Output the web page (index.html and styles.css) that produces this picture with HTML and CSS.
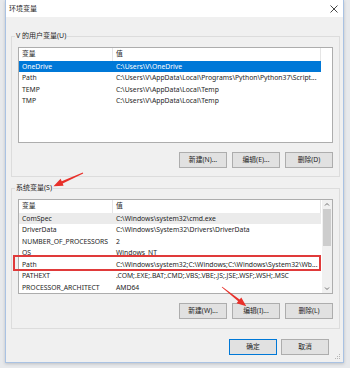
FILE: index.html
```html
<!DOCTYPE html>
<html lang="zh-CN">
<head>
<meta charset="utf-8">
<title>环境变量</title>
<link rel="stylesheet" href="styles.css">
</head>
<body>
<div class="dialog">
  <div class="titlebar">
    <span class="title">环境变量</span>
    <svg class="close" viewBox="0 0 8 8" width="8" height="8"><path d="M0.5 0.5 L7.5 7.5 M7.5 0.5 L0.5 7.5" stroke="#333" stroke-width="0.9" fill="none"/></svg>
  </div>
  <div class="content">
    <fieldset class="group">
      <legend>V 的用户变量(U)</legend>
      <div class="list list-user">
        <div class="rows">
          <div class="row head"><span>变量</span><span>值</span><span class="filler"></span></div>
          <div class="row sel"><span>OneDrive</span><span>C:\Users\V\OneDrive</span></div>
          <div class="row"><span>Path</span><span>C:\Users\V\AppData\Local\Programs\Python\Python37\Script...</span></div>
          <div class="row"><span>TEMP</span><span>C:\Users\V\AppData\Local\Temp</span></div>
          <div class="row"><span>TMP</span><span>C:\Users\V\AppData\Local\Temp</span></div>
        </div>
      </div>
      <div class="btns">
        <button class="btn">新建(N)...</button>
        <button class="btn">编辑(E)...</button>
        <button class="btn">删除(D)</button>
      </div>
    </fieldset>
    <fieldset class="group group-sys">
      <legend>系统变量(S)</legend>
      <div class="list list-sys">
        <div class="rows">
          <div class="row head"><span>变量</span><span>值</span></div>
          <div class="row hover"><span>ComSpec</span><span>C:\Windows\system32\cmd.exe</span></div>
          <div class="row"><span>DriverData</span><span>C:\Windows\System32\Drivers\DriverData</span></div>
          <div class="row"><span>NUMBER_OF_PROCESSORS</span><span>2</span></div>
          <div class="row"><span>OS</span><span>Windows_NT</span></div>
          <div class="row"><span>Path</span><span>C:\Windows\system32;C:\Windows;C:\Windows\System32\Wb...</span></div>
          <div class="row"><span>PATHEXT</span><span>.COM;.EXE;.BAT;.CMD;.VBS;.VBE;.JS;.JSE;.WSF;.WSH;.MSC</span></div>
          <div class="row"><span>PROCESSOR_ARCHITECT</span><span>AMD64</span></div>
        </div>
        <div class="vscroll">
          <svg class="arr" viewBox="0 0 10 9" width="10" height="9"><polyline points="3,5.5 5,3.5 7,5.5" fill="none" stroke="#606060" stroke-width="0.9"/></svg>
          <div class="track"><div class="thumb"></div></div>
          <svg class="arr" viewBox="0 0 10 9" width="10" height="9"><polyline points="3,3.5 5,5.5 7,3.5" fill="none" stroke="#606060" stroke-width="0.9"/></svg>
        </div>
      </div>
      <div class="btns">
        <button class="btn">新建(W)...</button>
        <button class="btn">编辑(I)...</button>
        <button class="btn">删除(L)</button>
      </div>
    </fieldset>
    <div class="footer">
      <button class="btn primary">确定</button>
      <button class="btn">取消</button>
    </div>
  </div>
  <svg class="grip" viewBox="0 0 6 6" width="6" height="6"><g fill="#b5b5b5"><rect x="4" y="0" width="1" height="1"/><rect x="2" y="2" width="1" height="1"/><rect x="4" y="2" width="1" height="1"/><rect x="0" y="4" width="1" height="1"/><rect x="2" y="4" width="1" height="1"/><rect x="4" y="4" width="1" height="1"/></g></svg>
</div>
<div class="mark"></div>
<svg class="arrows" viewBox="0 0 350 368" width="350" height="368">
  <polygon fill="#e8302a" points="83.2,173.4 62.7,183.4 63.6,185.8 53.5,186.2 60.6,178.8 61.7,181.2 82.8,172.6"/>
  <polygon fill="#e8302a" points="221.75,287.3 238.2,301.3 236.5,303.3 246.3,306.3 241.3,297.5 239.6,299.5 222.25,286.7"/>
</svg>
</body>
</html>
```

FILE: styles.css
```css
* { box-sizing: border-box; }
html, body { margin: 0; padding: 0; }
body {
  width: 350px;
  height: 368px;
  overflow: hidden;
  position: relative;
  background: #e7e9ec;
  font-family: "Noto Sans", "Noto Sans CJK SC", sans-serif;
  font-size: 6.8px;
  color: #1e1e1e;
}
.dialog {
  margin-left: 5px;
  width: 339px;
  height: 363px;
  background: #f0f0f0;
  border: 1px solid #a9c2e3;
  border-top: 0;
  display: flex;
  flex-direction: column;
  position: relative;
  box-shadow: 0 1px 3px rgba(0,0,0,0.18);
}
.titlebar {
  height: 17px;
  flex: none;
  background: #fff;
  display: flex;
  align-items: center;
  justify-content: space-between;
  padding: 0 3px 0 3px;
}
.title { line-height: 10px; font-size: 7px; }
.close { margin-right: 2px; display: block; }
.content {
  padding: 0 3px 0 5px;
  display: flex;
  flex-direction: column;
}
.group {
  margin: 14px 0 0;
  border: 1px solid #dcdcdc;
  padding: 6px 6px 8px;
  min-width: 0;
}
.group-sys { margin-top: 6px; padding-bottom: 9px; }
.group legend {
  padding: 0 1px;
  margin-left: -3px;
  line-height: 10px;
  font-size: 7px;
}
.list {
  background: #fff;
  border: 1px solid #adadad;
  display: flex;
  overflow: hidden;
}
.list-user { height: 96px; }
.list-sys { height: 95px; }
.rows { flex: 1; min-width: 0; }
.row {
  display: grid;
  grid-template-columns: 94px 208px;
  width: 302px;
  height: 11.6px;
  line-height: 11.6px;
  white-space: nowrap;
}
.row span {
  padding-left: 3px;
  overflow: hidden;
}
.row.head {
  height: 12.5px;
  line-height: 12.5px;
  width: auto;
  grid-template-columns: 94px 208px 1fr;
}
.list-sys .row.head { grid-template-columns: 94px 208px; width: 302px; }
.row.head span { border-right: 1px solid #e5e5e5; }
.row.head .filler { border-right: 0; }
.row.sel { background: #0078d7; color: #fff; }
.row.hover { background: #ebebeb; }
.vscroll {
  width: 10px;
  flex: none;
  margin-left: 1px;
  background: #f0f0f0;
  display: flex;
  flex-direction: column;
}
.arr { display: block; flex: none; }
.track { flex: 1; padding: 0 1px; }
.thumb { height: 37px; background: #cdcdcd; }
.btns {
  margin-top: 9px;
  display: flex;
  justify-content: flex-end;
  gap: 5px;
}
.btn {
  width: 48px;
  height: 16px;
  padding: 0;
  margin: 0;
  background: #e1e1e1;
  border: 1px solid #adadad;
  font-family: inherit;
  font-size: 6.8px;
  color: #1e1e1e;
  line-height: 14px;
}
.btn.primary { border-color: #0078d7; }
.footer {
  margin-top: 10px;
  display: flex;
  justify-content: flex-end;
  gap: 4px;
  padding-right: 11px;
}
.grip { position: absolute; right: 2px; bottom: 2px; }
.mark {
  position: absolute;
  left: 13px;
  top: 255px;
  width: 308px;
  height: 16px;
  border: 2px solid #e03a3a;
}
.arrows { position: absolute; left: 0; top: 0; pointer-events: none; }
```
